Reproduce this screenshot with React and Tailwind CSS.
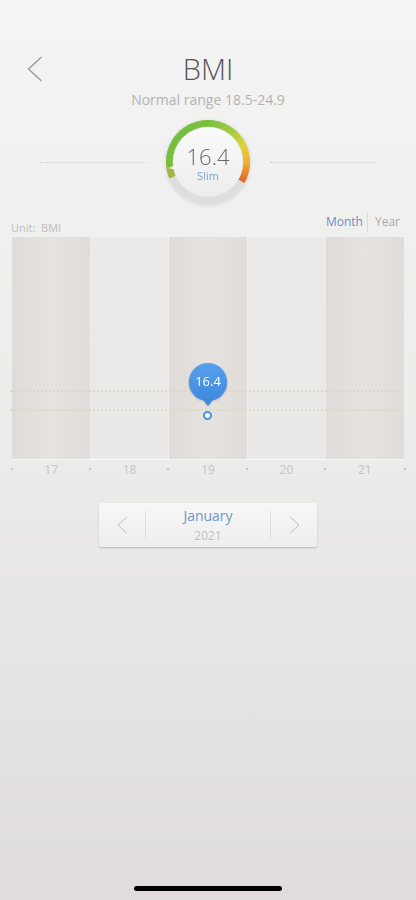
import React from "react";

const FONT = { fontFamily: '"Open Sans", "Noto Sans", Arial, sans-serif' };

// colour stops along the gauge arc, angle measured clockwise from 12 o'clock
const STOPS = [
  [247, [162, 180, 60]],
  [261, [160, 180, 60]],
  [263, [124, 190, 62]],
  [300, [116, 189, 60]],
  [360, [120, 192, 60]],
  [400, [168, 204, 62]],
  [425, [224, 210, 58]],
  [450, [240, 176, 48]],
  [480, [228, 98, 42]],
];

const colorAt = (a) => {
  for (let i = 0; i < STOPS.length - 1; i++) {
    const [a0, c0] = STOPS[i];
    const [a1, c1] = STOPS[i + 1];
    if (a >= a0 && a <= a1) {
      const t = (a - a0) / (a1 - a0);
      const c = c0.map((v, k) => Math.round(v + (c1[k] - v) * t));
      return `rgb(${c.join(",")})`;
    }
  }
  return "rgb(228,98,42)";
};

const pt = (deg, r, cx = 44, cy = 44) => {
  const rad = (deg * Math.PI) / 180;
  return [cx + r * Math.sin(rad), cy - r * Math.cos(rad)];
};

const arc = (a0, a1, r) => {
  const [x0, y0] = pt(a0, r);
  const [x1, y1] = pt(a1, r);
  const large = a1 - a0 > 180 ? 1 : 0;
  return `M ${x0} ${y0} A ${r} ${r} 0 ${large} 1 ${x1} ${y1}`;
};

const Gauge = () => {
  const segs = [];
  const start = 247;
  const end = 480;
  const step = 3;
  for (let a = start; a < end; a += step) {
    const b = Math.min(a + step + 0.6, end);
    segs.push(
      <path key={a} d={arc(a, b, 38.5)} stroke={colorAt(a + step / 2)} strokeWidth="7" fill="none" />
    );
  }
  const tip = pt(261, 40);
  const b1 = pt(257, 33);
  const b2 = pt(265, 33);

  return (
    <div className="relative w-[88px] h-[88px] shrink-0 drop-shadow-[0_1px_2px_rgba(0,0,0,0.12)]">
      <svg width="88" height="88" viewBox="0 0 88 88" className="absolute inset-0">
        <defs>
          <linearGradient id="disc" x1="0" y1="0" x2="0" y2="1">
            <stop offset="0" stopColor="#fbfbfb" />
            <stop offset="1" stopColor="#ececec" />
          </linearGradient>
        </defs>
        <circle cx="44" cy="44" r="38.5" stroke="#dedede" strokeWidth="7" fill="none" />
        {segs}
        <circle cx="44" cy="44" r="35" fill="url(#disc)" stroke="#e4e4e4" strokeWidth="0.5" />
        <polygon points={`${tip[0]},${tip[1]} ${b1[0]},${b1[1]} ${b2[0]},${b2[1]}`} fill="#f6f6f6" />
      </svg>
      <div className="absolute inset-0 flex flex-col items-center justify-center">
        <span className="text-[22px] leading-[22px] font-light text-[#6a6a6a] mt-[2px]">16.4</span>
        <span className="text-[11px] leading-[12px] text-[#7da2d2] mt-[3px]">Slim</span>
      </div>
    </div>
  );
};

const Bubble = () => (
  <svg width="40" height="44" viewBox="0 0 40 44">
    <defs>
      <linearGradient id="bub" x1="0" y1="0" x2="0" y2="1">
        <stop offset="0" stopColor="#57a0ec" />
        <stop offset="1" stopColor="#3f86dc" />
      </linearGradient>
    </defs>
    <path d="M 20 1 A 19 19 0 0 1 24.5 38.5 L 20 44 L 15.5 38.5 A 19 19 0 0 1 20 1 Z" fill="url(#bub)" />
  </svg>
);

const Chevron = ({ dir = "left", className = "" }) => (
  <svg width="14" height="24" viewBox="0 0 14 24" className={className}>
    <path
      d={dir === "left" ? "M 13 1 L 1 12 L 13 23" : "M 1 1 L 13 12 L 1 23"}
      stroke="currentColor"
      strokeWidth="1.3"
      fill="none"
    />
  </svg>
);

const cols = ["dark", "light", "dark", "light", "dark"];
const days = [17, 18, 19, 20, 21];

export default function App() {
  return (
    <div
      style={FONT}
      className="relative w-full h-[900px] overflow-hidden flex flex-col bg-gradient-to-b from-[#f4f4f4] via-[#ececeb] to-[#dfdcdb]"
    >
      {/* header */}
      <div className="grid grid-cols-[60px_1fr_60px] items-center pt-[50px]">
        <Chevron className="ml-[27px] text-[#9a9a9a] w-[16px] h-[26px]" />
        <h1 className="text-center text-[29px] leading-[38px] font-light text-[#555]">BMI</h1>
        <div />
      </div>
      <p className="text-center text-[14px] leading-[20px] text-[#b2b2b2] mt-[2px]">Normal range 18.5-24.9</p>

      {/* gauge */}
      <div className="flex items-center gap-[18px] px-[40px] mt-[8px]">
        <div className="flex-1 border-t border-dotted border-[#cfcfcf]" />
        <Gauge />
        <div className="flex-1 border-t border-dotted border-[#cfcfcf]" />
      </div>

      {/* unit + range toggle */}
      <div className="flex justify-between items-end px-[11px] h-[24px] mt-[6px]">
        <span className="text-[11px] leading-[14px] text-[#bdbdbd] mb-[1px]">Unit:&nbsp; BMI</span>
        <div className="flex items-center h-full pb-[4px] mr-[5px]">
          <span className="text-[12px] text-[#6b8fc4] pr-[4px]">Month</span>
          <div className="w-px h-[20px] bg-[#dcdcdc] mb-[-2px]" />
          <span className="text-[12px] text-[#aaa] pl-[7px]">Year</span>
        </div>
      </div>

      {/* chart */}
      <div className="relative mx-[12px] mt-[1px] h-[223px] border-b border-[#f8f8f8] shadow-[inset_0_0_14px_rgba(0,0,0,0.08)]">
        <div className="grid grid-cols-5 h-full">
          {cols.map((c, i) =>
            c === "dark" ? (
              <div key={i} className="bg-gradient-to-r from-[#dedbd9] via-[#e5e2e0] to-[#dfdcda]" />
            ) : (
              <div key={i} className="bg-gradient-to-b from-[#ebeae9] to-[#eae9e8] border-x border-[#efeeed]" />
            )
          )}
        </div>
        <div className="absolute left-[-2px] right-[6px] top-[153px] border-t-2 border-dotted border-[#d9dbbd]" />
        <div className="absolute left-[-2px] right-[6px] top-[172px] border-t-2 border-dotted border-[#d9dbbd]" />
        <div className="absolute left-[176px] top-[125px] w-[40px] h-[44px] drop-shadow-[0_1px_1px_rgba(0,0,0,0.15)]">
          <Bubble />
          <span className="absolute inset-x-0 top-[10px] text-center text-[13px] leading-[18px] text-white">16.4</span>
        </div>
        <div className="absolute left-[191px] top-[174px] w-[9px] h-[9px] rounded-full border-2 border-[#4a8fe0] bg-white" />
      </div>

      {/* x axis */}
      <div className="relative grid grid-cols-5 mx-[12px] h-[20px]">
        {days.map((d, i) => (
          <div key={d} className="relative flex items-center justify-center">
            <span className="absolute left-[-1.5px] top-[8px] w-[2px] h-[2px] rounded-full bg-[#b8b8b8]" />
            <span className="text-[12px] text-[#c4c4c4]">{d}</span>
            {i === 4 && <span className="absolute right-[-1.5px] top-[8px] w-[2px] h-[2px] rounded-full bg-[#b8b8b8]" />}
          </div>
        ))}
      </div>

      {/* month selector */}
      <div className="self-center mt-[23px] w-[218px] h-[44px] flex items-center rounded-[2px] bg-gradient-to-b from-[#f7f7f7] to-[#eeeeee] shadow-[0_1px_2px_rgba(0,0,0,0.22)]">
        <div className="w-[46px] flex justify-center">
          <Chevron className="text-[#bcbcbc] w-[15px] h-[18px]" />
        </div>
        <div className="w-px h-[28px] bg-[#dedede]" />
        <div className="flex-1 flex flex-col items-center">
          <span className="text-[14px] leading-[20px] text-[#6f96c8]">January</span>
          <span className="text-[12px] leading-[18px] text-[#c2c2c2] mt-[1px]">2021</span>
        </div>
        <div className="w-px h-[28px] bg-[#dedede]" />
        <div className="w-[46px] flex justify-center">
          <Chevron dir="right" className="text-[#bcbcbc] w-[15px] h-[18px]" />
        </div>
      </div>

      {/* home indicator */}
      <div className="mt-auto mb-[9px] self-center w-[148px] h-[5px] rounded-full bg-black" />
    </div>
  );
}
